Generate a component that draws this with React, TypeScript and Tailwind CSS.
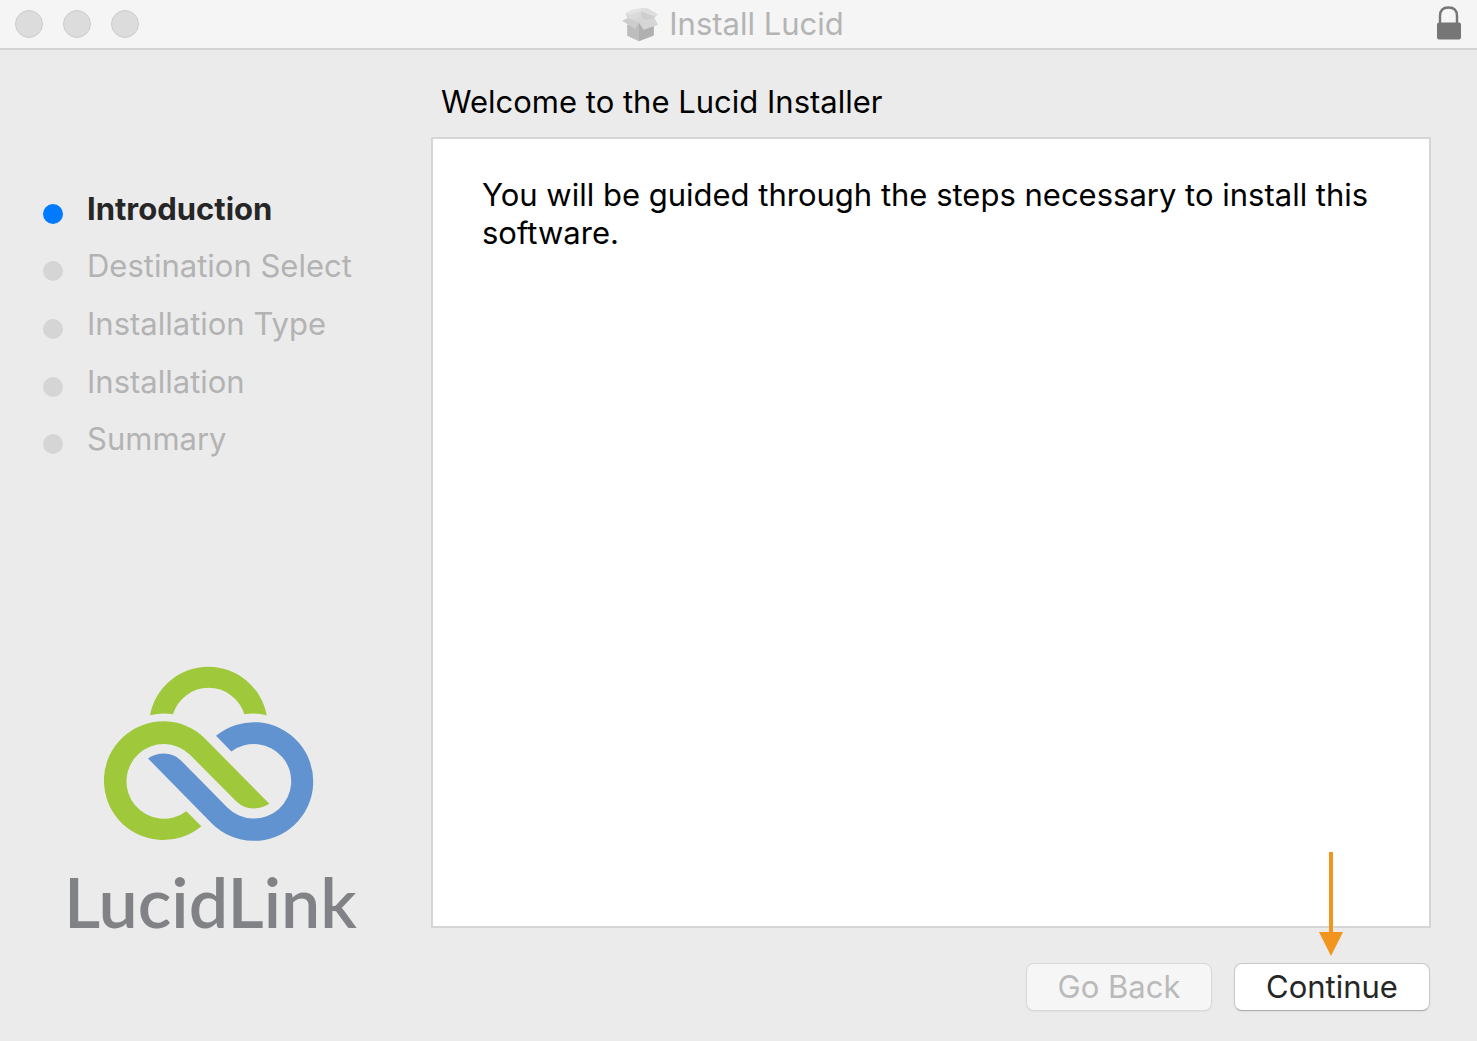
const steps = ['Introduction', 'Destination Select', 'Installation Type', 'Installation', 'Summary'];

function PackageIcon() {
  return (
    <svg viewBox="0 0 114 106" className="h-[35px] w-[38px]" aria-hidden="true">
      <path d="M14 18 L62 3 L110 22 L98 36 L54 50 L19 36 Z" fill="#d6d6d6" />
      <path d="M14 18 L30 9 L64 2 L60 14 L24 24 Z" fill="#e4e4e4" />
      <path d="M64 2 L80 4 L112 22 L98 27 L60 14 Z" fill="#dedede" />
      <path d="M24 24 L60 14 L60 30 L28 40 L19 34 Z" fill="#dbdbdb" />
      <path d="M60 14 L98 27 L98 34 L76 42 L60 30 Z" fill="#cecece" />
      <path d="M18 54 L54 48 V104 L18 87 Z" fill="#bdbdbd" />
      <path d="M54 48 L99 54 V86 L54 104 Z" fill="#b0b0b0" />
      <path d="M3 42 L20 33 L54 48 L42 67 Z" fill="#cdcdcd" />
      <path d="M54 48 L100 32 L112 54 L68 69 Z" fill="#d6d6d6" />
    </svg>
  );
}

function LockIcon() {
  return (
    <svg viewBox="0 0 26 36" className="h-9 w-[26px]" role="img" aria-label="Locked">
      <path d="M4 18 V10 C4 4 7 1.500 12.500 1.500 C18 1.500 21 4 21 10 V18" fill="none" stroke="#767676" strokeWidth="2.400" />
      <rect x="1" y="16.500" width="24" height="17" rx="2" fill="#767676" />
    </svg>
  );
}

function LucidLinkMark() {
  return (
    <svg viewBox="132 44 630 530" className="h-[177px] w-[210px]" aria-hidden="true">
      <path
        d="M270 197 A178 178 0 0 1 620 197 Q586 189 553 194 A112 112 0 0 0 339 194 Q305 189 270 197 Z"
        fill="#9fc83b"
      />
      <path
        d="M424 530 A178 178 0 1 1 437 269 L628 463 Q605 477 580 477 Q552 477 530 457 L390 316 A112 112 0 1 0 379 485 Z"
        fill="#9fc83b"
      />
      <path
        d="M468 259 A178 178 0 1 1 455 521 L264 327 Q285 312 312 312 Q342 312 362 332 L502 474 A112 112 0 1 0 514 306 Z"
        fill="#6093cf"
      />
    </svg>
  );
}

export default function App() {
  return (
    <div className="flex min-h-screen flex-col bg-[#ebebeb] font-['Inter',sans-serif] text-[31px] leading-[38px] text-black">
      <header className="grid h-[50px] grid-cols-[1fr_auto_1fr] items-center border-b-2 border-[#d3d3d3] bg-[#f5f5f5] px-[15px]">
        <div className="flex gap-5">
          <button aria-label="Close" className="size-7 rounded-full border border-[#cdcdcd] bg-[#dcdcdc]" />
          <button aria-label="Minimize" className="size-7 rounded-full border border-[#cdcdcd] bg-[#dcdcdc]" />
          <button aria-label="Zoom" className="size-7 rounded-full border border-[#cdcdcd] bg-[#dcdcdc]" />
        </div>
        <div className="flex items-center gap-2.5 pr-3 text-[#b4b4b4]">
          <PackageIcon />
          <h1>Install Lucid</h1>
        </div>
        <div className="flex justify-end">
          <LockIcon />
        </div>
      </header>

      <div className="flex flex-1">
        <aside className="flex w-[431px] shrink-0 flex-col justify-between pt-[130px] pb-[104px]">
          <ol className="grid h-[288px] grid-rows-5 pl-[43px]">
            {steps.map((step, i) => (
              <li key={step} className="flex items-center gap-6" aria-current={i === 0 ? 'step' : undefined}>
                <span className={i === 0 ? 'mt-2.5 size-5 rounded-full bg-[#007aff]' : 'mt-2.5 size-5 rounded-full bg-[#d5d5d5]'} />
                <span className={i === 0 ? 'font-bold text-[#262626]' : 'text-[#b3b3b3]'}>{step}</span>
              </li>
            ))}
          </ol>
          <div className="flex flex-col gap-6 pl-16">
            <div className="pl-10">
              <LucidLinkMark />
            </div>
            <p className="font-['Lato',sans-serif] text-[70px] leading-[72px] font-semibold text-[#808285]">LucidLink</p>
          </div>
        </aside>

        <main className="flex flex-1 flex-col pt-[33px] pr-[46px] pb-[30px]">
          <h2 className="pl-2.5">Welcome to the Lucid Installer</h2>
          <section className="mt-4 flex-1 border-2 border-[#d5d5d5] bg-white px-[49px] py-[37px]">
            <p>You will be guided through the steps necessary to install this software.</p>
          </section>
          <div className="mt-[35px] flex justify-end gap-[22px] pr-px">
            <button
              disabled
              className="h-12 w-[186px] rounded-lg border border-[#d9d9d9] bg-[#f6f6f6] text-[#bababa] shadow-xs"
            >
              Go Back
            </button>
            <div className="relative">
              <button className="h-12 w-[196px] rounded-lg border border-[#c8c8c8] border-b-[#adadad] bg-white text-[#262626] shadow-xs">
                Continue
              </button>
              <svg
                viewBox="0 0 24 104"
                className="absolute right-[87px] bottom-full mb-[7px] h-[104px] w-6"
                aria-hidden="true"
              >
                <path d="M10 0 H14 V80 H24 L12 104 L0 80 H10 Z" fill="#f2951f" />
              </svg>
            </div>
          </div>
        </main>
      </div>
    </div>
  );
}
